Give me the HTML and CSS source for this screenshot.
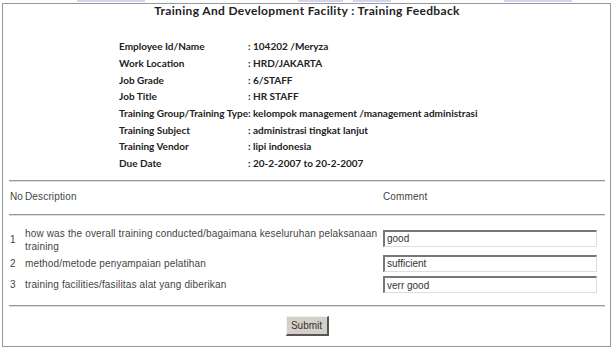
FILE: index.html
```html
<!DOCTYPE html>
<html lang="en">
<head>
    <meta charset="UTF-8">
    <title>Training Feedback</title>
    <link rel="stylesheet" href="styles.css">
</head>
<body>
    <div class="tabs">
        <span class="tab tab-a"></span>
        <span class="tab tab-b"></span>
        <span class="tab tab-c"></span>
        <span class="tab tab-d"></span>
    </div>
    <div class="box">
        <div class="title">Training And Development Facility : Training Feedback</div>

        <div class="info">
            <div class="label">Employee Id/Name</div><div class="value">: 104202 /Meryza</div>
            <div class="label">Work Location</div><div class="value">: HRD/JAKARTA</div>
            <div class="label">Job Grade</div><div class="value">: 6/STAFF</div>
            <div class="label">Job Title</div><div class="value">: HR STAFF</div>
            <div class="label">Training Group/Training Type</div><div class="value">: kelompok management /management administrasi</div>
            <div class="label">Training Subject</div><div class="value">: administrasi tingkat lanjut</div>
            <div class="label">Training Vendor</div><div class="value">: lipi indonesia</div>
            <div class="label">Due Date</div><div class="value">: 20-2-2007 to 20-2-2007</div>
        </div>

        <div class="rule"></div>
        <div class="head-row">
            <div class="no">No</div>
            <div class="desc">Description</div>
            <div class="comment">Comment</div>
        </div>
        <div class="rule"></div>

        <div class="questions">
            <div class="q-row q-tall">
                <div class="no">1</div>
                <div class="desc">how was the overall training conducted/bagaimana keseluruhan pelaksanaan training</div>
                <div class="comment"><input class="field" type="text" value="good"></div>
            </div>
            <div class="q-row">
                <div class="no">2</div>
                <div class="desc">method/metode penyampaian pelatihan</div>
                <div class="comment"><input class="field" type="text" value="sufficient"></div>
            </div>
            <div class="q-row">
                <div class="no">3</div>
                <div class="desc">training facilities/fasilitas alat yang diberikan</div>
                <div class="comment"><input class="field" type="text" value="verr good"></div>
            </div>
        </div>

        <div class="rule"></div>
        <div class="actions">
            <button class="submit">Submit</button>
        </div>
    </div>
</body>
</html>
```

FILE: styles.css
```css
* {
    box-sizing: border-box;
}

body {
    margin: 0;
    padding: 0 3px 3px 2px;
    background: #fff;
    font-family: "Liberation Sans", Arial, sans-serif;
    font-size: 10px;
    letter-spacing: 0.15px;
    color: #444;
}

.tabs {
    position: relative;
    height: 3px;
}

.tab {
    position: absolute;
    top: 0;
    height: 2px;
    background: #d6d4f0;
}

.tab-a { left: 75px; width: 68px; }
.tab-b { left: 296px; width: 45px; }
.tab-c { left: 351px; width: 38px; }
.tab-d { left: 502px; width: 68px; }

.box {
    border: 1px solid #999;
    height: 344px;
    padding: 0 5px 0 6px;
}

.title {
    font-family: Lato, "DejaVu Sans Condensed", sans-serif;
    font-weight: bold;
    font-size: 12px;
    letter-spacing: 0.35px;
    color: #222;
    text-align: center;
    line-height: 14px;
}

.info {
    display: grid;
    grid-template-columns: 129px auto;
    grid-auto-rows: 16.7px;
    margin: 20px 0 0 110px;
    font-family: Lato, "DejaVu Sans Condensed", sans-serif;
    font-weight: bold;
    font-size: 10px;
    letter-spacing: 0;
    color: #222;
    align-items: center;
    white-space: nowrap;
}

.rule {
    height: 2px;
    border-top: 1px solid #999;
    border-bottom: 1px solid #ddd;
}

.info + .rule {
    margin-top: 8px;
}

.head-row {
    display: flex;
    align-items: center;
    height: 32px;
    padding-bottom: 2px;
}

.no {
    flex: none;
    width: 16px;
    padding-left: 1px;
}

.desc {
    flex: none;
    width: 358px;
    line-height: 13px;
}

.comment {
    flex: none;
    width: 214px;
}

.questions {
    padding: 11px 0 9px;
}

.q-row {
    display: flex;
    align-items: center;
    height: 21.5px;
}

.q-tall {
    height: 26px;
}

.q-tall .comment {
    padding-bottom: 3px;
}

.field {
    width: 214px;
    height: 17px;
    margin: 0;
    padding: 0 2px;
    border: 1px solid #ddd;
    border-top: 2px solid #777;
    border-left: 2px solid #777;
    font-family: "Liberation Sans", Arial, sans-serif;
    font-size: 10px;
    color: #333;
}

.actions {
    display: flex;
    justify-content: center;
    padding-top: 9px;
}

.submit {
    width: 43px;
    height: 20px;
    padding: 0;
    background: #d4d0c8;
    border: 1px solid #f4f2ee;
    border-right: 2px solid #555;
    border-bottom: 2px solid #555;
    font-family: "Liberation Sans", Arial, sans-serif;
    font-size: 10px;
    color: #333;
}
```
